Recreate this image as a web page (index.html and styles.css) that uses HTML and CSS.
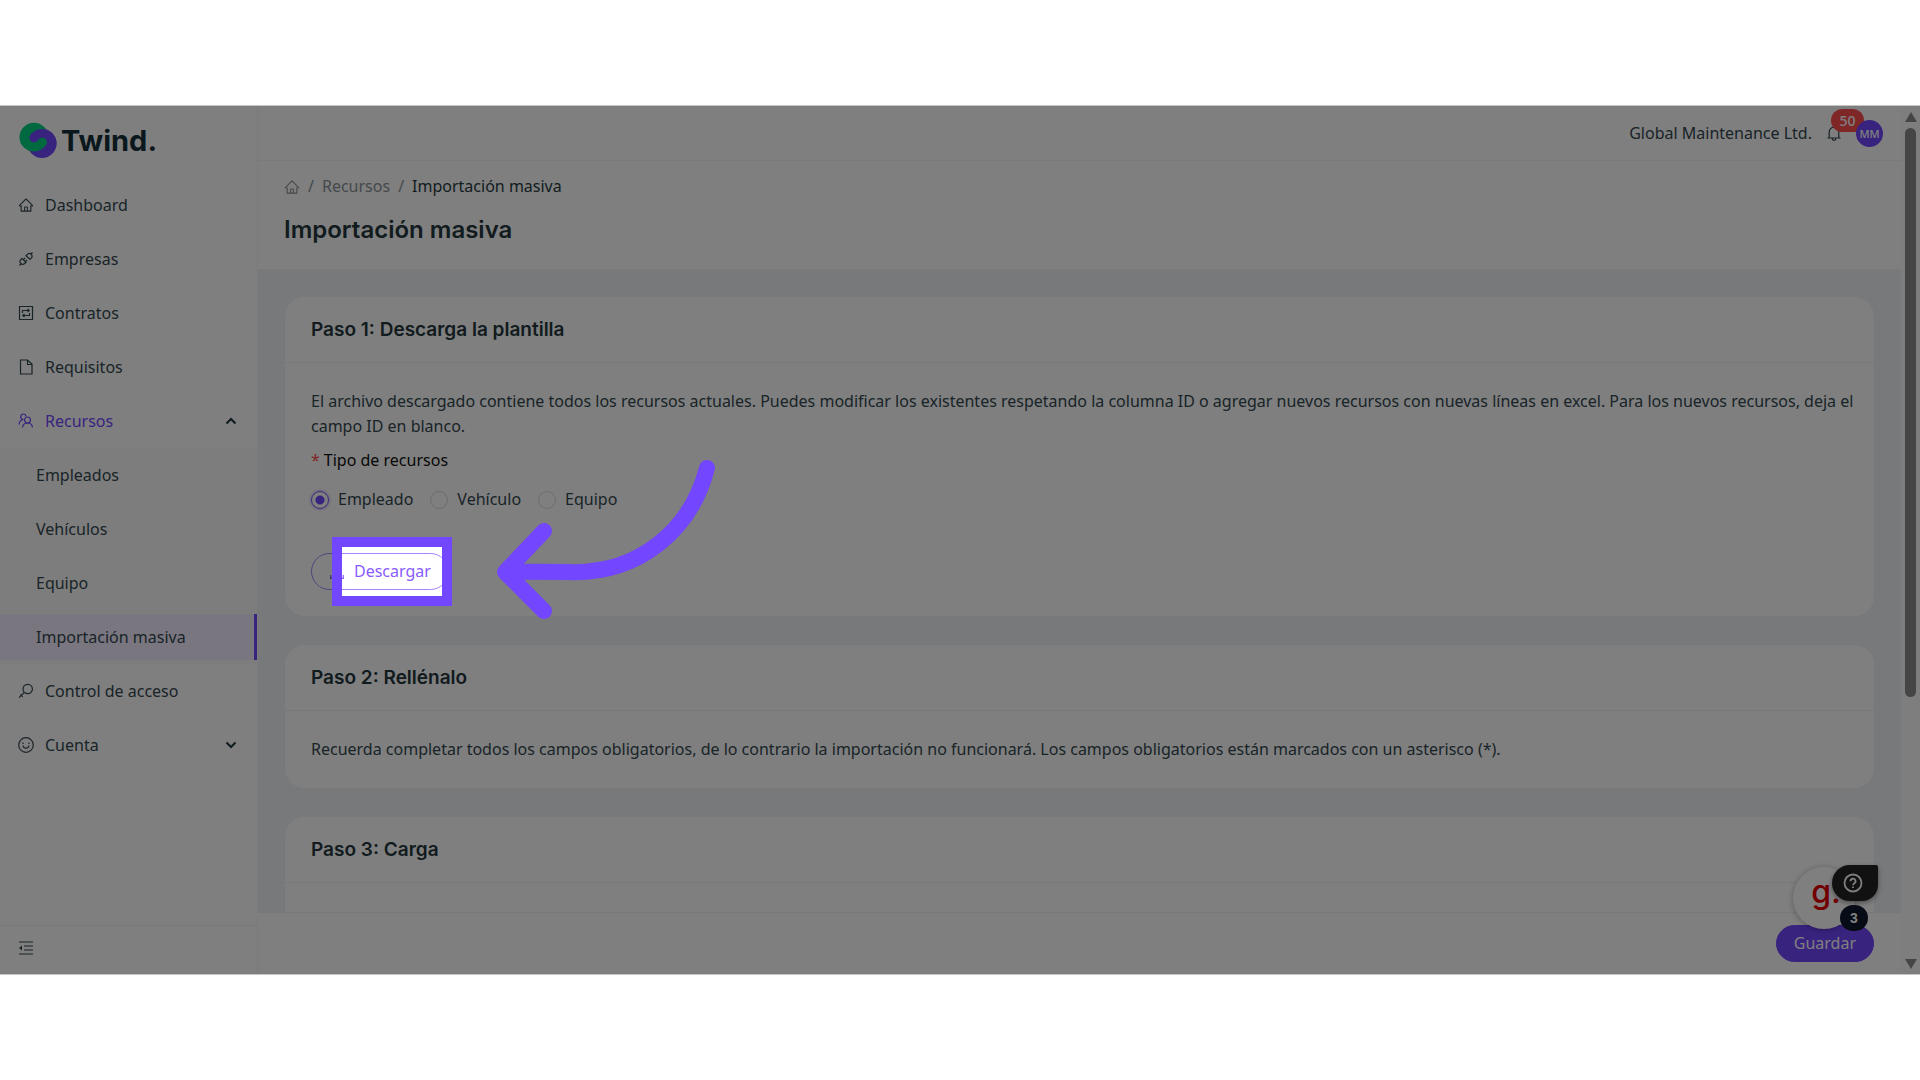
FILE: index.html
```html
<!DOCTYPE html>
<html lang="es">
<head>
    <meta charset="UTF-8">
    <title>Twind. - Importación masiva</title>
    <link rel="stylesheet" href="styles.css">
</head>
<body>
    <svg class="sprite" aria-hidden="true">
        <symbol id="icon-home" viewBox="0 0 1024 1024">
            <path fill="currentColor" d="M946.5 505L560.1 118.8l-25.9-25.9a31.5 31.5 0 0 0-44.4 0L77.5 505a63.9 63.9 0 0 0-18.8 46c.4 35.2 29.7 63.3 64.9 63.3h42.5V940h691.8V614.3h43.4c17.1 0 33.2-6.7 45.3-18.8a63.6 63.6 0 0 0 18.7-45.3c0-17-6.7-33.1-18.8-45.2zM568 868H456V664h112v204zm217.9-325.7V868H632V640c0-22.1-17.9-40-40-40H432c-22.1 0-40 17.9-40 40v228H238.1V542.3h-96l370-369.7 23.1 23.1L882 542.3h-96.1z"/>
        </symbol>
        <symbol id="icon-chevron" viewBox="0 0 12 12">
            <path fill="none" stroke="currentColor" stroke-width="2.2" d="M1.5 8.5L6 4l4.500 4.500"/>
        </symbol>
    </svg>

    <div class="screen">
        <aside class="sidebar">
            <div class="logo">
                <svg class="logo-mark" viewBox="58 70 112 110">
                    <clipPath id="ring"><circle cx="126" cy="134" r="43"/></clipPath>
                    <circle cx="126" cy="134" r="43" fill="#7146ff"/>
                    <circle cx="102" cy="115" r="43" fill="#00d27f"/>
                    <path clip-path="url(#ring)" fill="#7146ff" d="M80 60V118H89A13 13 0 0 0 111 127L117 121A14 14 0 1 1 137 141L132 148L180 148V60Z"/>
                </svg>
                <span class="logo-text">Twind.</span>
            </div>

            <nav class="menu">
                <a href="#" class="menu-item">
                    <svg class="icon"><use href="#icon-home"/></svg>
                    Dashboard
                </a>
                <a href="#" class="menu-item">
                    <svg class="icon line" viewBox="0 0 16 16">
                        <path d="M1.500 14.500l2-2M14.500 1.500l-2 2M4 7.500L2.800 8.700a2.700 2.700 0 0 0 0 3.800 2.700 2.700 0 0 0 3.800 0L8 11.200zM12 8.400l1.200-1.200a2.700 2.700 0 0 0 0-3.800 2.700 2.700 0 0 0-3.800 0L8 4.800zM5.500 8.500l1.500-1.500M7.500 10.500L9 9"/>
                    </svg>
                    Empresas
                </a>
                <a href="#" class="menu-item">
                    <svg class="icon line" viewBox="0 0 16 16">
                        <path d="M1.500 1.500h13v13h-13zM4.500 8V5.500h6.500M9.500 4l1.700 1.500L9.500 7M11.500 8v2.500H5M6.500 9l-1.700 1.500L6.500 12"/>
                    </svg>
                    Contratos
                </a>
                <a href="#" class="menu-item">
                    <svg class="icon line" viewBox="0 0 16 16">
                        <path d="M2.500 1h7L14 5v10H2.500zM9.500 1v4.500H14"/>
                    </svg>
                    Requisitos
                </a>
                <a href="#" class="menu-item current">
                    <svg class="icon line" viewBox="0 0 16 16">
                        <circle cx="9.500" cy="7" r="3"/>
                        <path d="M4.500 14.500c.3-2.800 2.300-4.500 5-4.500s4.700 1.700 5 4.500M8 3.500C7.800 2 6.900 1 5.500 1A2.800 2.800 0 0 0 4.800 6.500M1 11.500c.2-2.800 1.700-4.600 4.500-5"/>
                    </svg>
                    Recursos
                    <svg class="arrow"><use href="#icon-chevron"/></svg>
                </a>
                <div class="submenu">
                    <a href="#" class="menu-item">Empleados</a>
                    <a href="#" class="menu-item">Vehículos</a>
                    <a href="#" class="menu-item">Equipo</a>
                    <a href="#" class="menu-item selected">Importación masiva</a>
                </div>
                <a href="#" class="menu-item">
                    <svg class="icon line" viewBox="0 0 16 16">
                        <circle cx="9.700" cy="6" r="4.700"/>
                        <path d="M6.300 9.300L1 14.600M2.500 11.500l2.300 2.300"/>
                    </svg>
                    Control de acceso
                </a>
                <a href="#" class="menu-item">
                    <svg class="icon line" viewBox="0 0 16 16">
                        <circle cx="8" cy="8" r="7.300"/>
                        <path d="M5 8.500c.3 1.800 1.500 2.700 3 2.700s2.700-.9 3-2.700M5 5.500v1.400M11 5.500v1.400"/>
                    </svg>
                    Cuenta
                    <svg class="arrow down"><use href="#icon-chevron"/></svg>
                </a>
            </nav>

            <button class="collapse" aria-label="Contraer menú">
                <svg class="icon line" viewBox="0 0 16 16">
                    <path d="M1 2h14M6 6h9M6 10h9M1 14h14"/>
                    <path class="solid" d="M4 5.500v5L1 8z"/>
                </svg>
            </button>
        </aside>

        <div class="main">
            <header class="topbar">
                <span>Global Maintenance Ltd.</span>
                <button class="bell" aria-label="Notificaciones">
                    <svg class="icon line" viewBox="0 0 16 16">
                        <path d="M1.500 13h13M3.200 13V7a4.800 4.800 0 0 1 9.600 0v6M8 2.200V.8M6.200 13.500a1.800 1.800 0 0 0 3.600 0"/>
                    </svg>
                    <span class="badge">50</span>
                </button>
                <span class="avatar">MM</span>
            </header>

            <div class="page-head">
                <nav class="breadcrumb">
                    <a href="#" aria-label="Inicio"><svg class="icon"><use href="#icon-home"/></svg></a>
                    <span>/</span>
                    <a href="#">Recursos</a>
                    <span>/</span>
                    <span class="here">Importación masiva</span>
                </nav>
                <h1>Importación masiva</h1>
            </div>

            <div class="content">
                <section class="card">
                    <h2>Paso 1: Descarga la plantilla</h2>
                    <div class="card-body">
                        <p>El archivo descargado contiene todos los recursos actuales. Puedes modificar los existentes respetando la columna ID o agregar nuevos recursos con nuevas líneas en excel. Para los nuevos recursos, deja el campo ID en blanco.</p>
                        <fieldset>
                            <legend><span class="required">*</span>Tipo de recursos</legend>
                            <div class="radios">
                                <label><input type="radio" name="tipo" checked>Empleado</label>
                                <label><input type="radio" name="tipo">Vehículo</label>
                                <label><input type="radio" name="tipo">Equipo</label>
                            </div>
                        </fieldset>
                        <div class="download">
                            <button class="btn">
                                <svg class="icon line" viewBox="0 0 16 16">
                                    <path d="M8 1v9M4.500 7L8 10.500 11.500 7M1.700 11v3.300h12.600V11"/>
                                </svg>
                                Descargar
                            </button>
                            <!-- everything outside the spotlight is dimmed by its shadow -->
                            <div class="spotlight"></div>
                            <svg class="pointer" viewBox="0 0 230 170">
                                <path d="M212 18C196 80 144 125 72 122L12 121.500M49 81L10 122L49 161"/>
                            </svg>
                        </div>
                    </div>
                </section>

                <section class="card">
                    <h2>Paso 2: Rellénalo</h2>
                    <div class="card-body">
                        <p>Recuerda completar todos los campos obligatorios, de lo contrario la importación no funcionará. Los campos obligatorios están marcados con un asterisco (*).</p>
                    </div>
                </section>

                <section class="card">
                    <h2>Paso 3: Carga</h2>
                    <div class="card-body"></div>
                </section>
            </div>

            <footer class="actions">
                <button class="btn primary">Guardar</button>
            </footer>
        </div>

        <div class="scrollbar">
            <svg viewBox="0 0 12 10"><path d="M6 0l6 10H0z"/></svg>
            <div class="track"><div class="thumb"></div></div>
            <svg viewBox="0 0 12 10"><path d="M0 0h12L6 10z"/></svg>
        </div>

        <div class="widget">
            <span class="widget-face">g.</span>
            <button class="widget-help" aria-label="Ayuda">
                <svg viewBox="0 0 20 20">
                    <circle cx="10" cy="10" r="8.500"/>
                    <path d="M7.500 8.200a2.500 2.500 0 1 1 3.700 2.200c-.8.500-1.200.9-1.200 1.800M10 13.500v1.500"/>
                </svg>
            </button>
            <span class="widget-count">3</span>
        </div>
    </div>
</body>
</html>
```
FILE: styles.css
```css
* {
    box-sizing: border-box;
}
body {
    margin: 0;
    padding: 105px 0;
    height: 100vh;
    background-color: #fff;
    font-family: 'Noto Sans', sans-serif;
    font-size: 16px;
    line-height: 25px;
    color: #334850;
}
a {
    color: inherit;
    text-decoration: none;
}
button {
    font: inherit;
    color: inherit;
    background: none;
    border: none;
    padding: 0;
    cursor: pointer;
}
h1, h2, p {
    margin: 0;
}
.sprite {
    display: none;
}
.screen {
    position: relative;
    display: flex;
    height: 100%;
    overflow: hidden;
    background-color: #fff;
    border-top: 1px solid #c4c6c4;
    border-bottom: 1px solid #c4c6c4;
}
.icon {
    flex: none;
    display: block;
    width: 16px;
    height: 16px;
}
.line {
    fill: none;
    stroke: currentColor;
    stroke-width: 1.2;
}
.line .solid {
    fill: currentColor;
    stroke: none;
}

/* Sidebar */
.sidebar {
    flex: none;
    width: 258px;
    display: flex;
    flex-direction: column;
    border-right: 1px solid #f7f7f7;
}
.logo {
    display: flex;
    align-items: center;
    gap: 4px;
    height: 69px;
    padding-left: 19px;
}
.logo-mark {
    width: 38px;
    height: 37px;
}
.logo-text {
    font-family: Inter, sans-serif;
    font-size: 29px;
    font-weight: 700;
    color: #14303a;
}
.menu {
    flex: 1;
    display: flex;
    flex-direction: column;
    padding-top: 3px;
}
.menu-item {
    display: flex;
    align-items: center;
    gap: 11px;
    height: 46px;
    margin: 4px 0;
    padding: 0 20px 0 18px;
}
.current {
    color: #7146ff;
}
.arrow {
    width: 12px;
    height: 12px;
    margin-left: auto;
    color: #263b42;
}
.arrow.down {
    transform: rotate(180deg);
}
.submenu {
    display: flex;
    flex-direction: column;
    background-color: #fafafa;
}
.submenu .menu-item {
    padding-left: 36px;
}
.submenu .selected {
    background-color: #f4edff;
    border-right: 3px solid #7146ff;
}
.collapse {
    height: 49px;
    padding: 0 0 4px 18px;
    border-top: 1px solid #f0f0f0;
}

/* Main column */
.main {
    flex: 1;
    min-width: 0;
    display: flex;
    flex-direction: column;
    background-color: #f0f2f5;
}
.topbar {
    flex: none;
    display: flex;
    align-items: center;
    justify-content: flex-end;
    gap: 14px;
    height: 55px;
    padding-right: 18px;
    background-color: #fff;
    border-bottom: 1px solid #f5f5f5;
}
.bell {
    position: relative;
}
.badge {
    position: absolute;
    top: -16px;
    left: 5px;
    width: 33px;
    height: 23px;
    border-radius: 12px;
    background-color: #ff4d4f;
    color: #fff;
    font-size: 14px;
    font-weight: 500;
    line-height: 23px;
    text-align: center;
}
.avatar {
    position: relative;
    width: 27px;
    height: 27px;
    border-radius: 50%;
    background-color: #7146ff;
    color: #fff;
    font-size: 11px;
    font-weight: 500;
    line-height: 27px;
    text-align: center;
}
.page-head {
    flex: none;
    padding: 13px 26px 20px;
    background-color: #fff;
}
.breadcrumb {
    display: flex;
    align-items: center;
    gap: 8px;
    color: #8b9296;
}
.breadcrumb .here {
    color: #263b42;
}
h1, h2 {
    font-family: Inter, sans-serif;
    font-weight: 600;
    color: #24363d;
}
h1 {
    margin-top: 12px;
    font-size: 24px;
    line-height: 38px;
}
.content {
    flex: 1;
    min-height: 0;
    display: flex;
    flex-direction: column;
    gap: 29px;
    padding: 28px 27px;
}
.card {
    flex: none;
    border-radius: 20px;
    background-color: #fff;
}
h2 {
    padding: 20px 26px;
    font-size: 19px;
    line-height: 25px;
    border-bottom: 1px solid #f0f0f0;
}
.card-body {
    min-height: 76px;
    padding: 26px 16px 26px 26px;
}
fieldset {
    margin: 9px 0 0;
    padding: 0;
    border: none;
}
legend {
    padding: 0;
    color: #111;
}
.required {
    margin-right: 4px;
    color: #ff4d4f;
}
.radios {
    display: flex;
    gap: 17px;
    margin-top: 14px;
}
.radios label {
    display: flex;
    align-items: center;
    gap: 9px;
}
input[type="radio"] {
    appearance: none;
    width: 18px;
    height: 18px;
    margin: 0;
    border: 1px solid #d9d9d9;
    border-radius: 50%;
}
input[type="radio"]:checked {
    border-color: #7146ff;
    background: radial-gradient(circle, #7146ff 4px, transparent 5px);
    box-shadow: 0 0 0 2px #ece6ff;
}
.btn {
    display: flex;
    align-items: center;
    gap: 9px;
    height: 37px;
    padding: 0 17px;
    border: 1px solid #a584ff;
    border-radius: 19px;
    color: #8a5cff;
}
.btn.primary {
    background-color: #7146ff;
    border-color: #7146ff;
    color: #fff;
}
.download {
    position: relative;
    width: max-content;
    margin-top: 41px;
}
.spotlight {
    position: absolute;
    z-index: 10;
    top: -16px;
    left: 21px;
    width: 120px;
    height: 69px;
    border: 10px solid #7346ff;
    box-shadow: 0 0 0 9999px rgba(0, 0, 0, 0.5);
}
.pointer {
    position: absolute;
    z-index: 11;
    top: -103px;
    left: 184px;
    width: 230px;
    height: 170px;
    fill: none;
    stroke: #7346ff;
    stroke-width: 16;
    stroke-linecap: round;
    stroke-linejoin: round;
}
.actions {
    position: relative;
    flex: none;
    display: flex;
    justify-content: flex-end;
    padding: 12px 27px;
    background-color: #fff;
    border-top: 1px solid #f0f0f0;
}

/* Page scrollbar */
.scrollbar {
    flex: none;
    width: 19px;
    display: flex;
    flex-direction: column;
    align-items: center;
    gap: 6px;
    padding: 6px 0 5px;
    background-color: #fcfcfc;
}
.scrollbar svg {
    width: 12px;
    height: 10px;
    fill: #8b8b8b;
}
.track {
    flex: 1;
}
.thumb {
    width: 11px;
    height: 69%;
    border-radius: 6px;
    background-color: #8b8b8b;
}

/* Floating help widget */
.widget {
    position: absolute;
    right: 42px;
    bottom: 43px;
    width: 85px;
    height: 66px;
}
.widget-face {
    position: absolute;
    left: 0;
    bottom: 2px;
    width: 62px;
    height: 62px;
    padding-left: 4px;
    border-radius: 50%;
    background-color: #fff;
    box-shadow: 0 1px 6px rgba(0, 0, 0, 0.3);
    color: #e60000;
    font-family: Inter, sans-serif;
    font-size: 32px;
    font-weight: 500;
    line-height: 50px;
    text-align: center;
}
.widget-help {
    position: absolute;
    top: 0;
    right: 0;
    display: flex;
    align-items: center;
    justify-content: center;
    width: 46px;
    height: 36px;
    border-radius: 18px 2px 16px 18px;
    background-color: #222;
    box-shadow: 0 2px 5px rgba(0, 0, 0, 0.4);
}
.widget-help svg {
    width: 20px;
    height: 20px;
    margin-right: 4px;
    fill: none;
    stroke: #fff;
    stroke-width: 1.8;
}
.widget-count {
    position: absolute;
    right: 10px;
    bottom: 0;
    width: 28px;
    height: 26px;
    border-radius: 14px;
    background-color: #0f172a;
    color: #fff;
    font-family: 'Liberation Sans', sans-serif;
    font-size: 14px;
    font-weight: 700;
    line-height: 26px;
    text-align: center;
}
```
